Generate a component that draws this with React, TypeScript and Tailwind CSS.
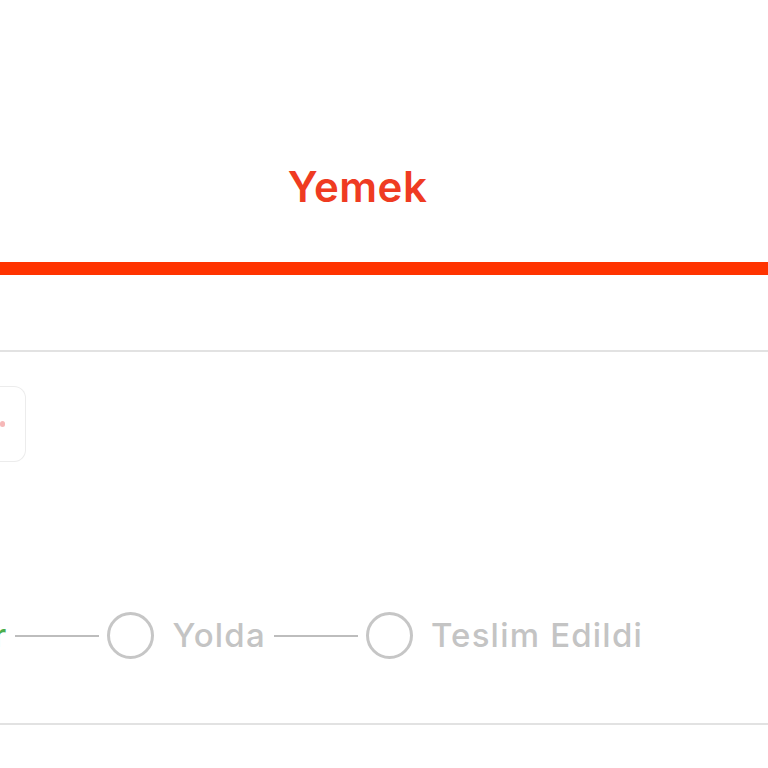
import React from "react"

const steps = [
  { label: "Hazırlanıyor", done: true },
  { label: "Yolda", done: false },
  { label: "Teslim Edildi", done: false },
]

function StepCircle() {
  return <div className="w-[47px] h-[47px] rounded-full border-[3.5px] border-[#c6c6c6] shrink-0" />
}

export default function App() {
  return (
    <div
      className="w-[768px] h-[768px] bg-white overflow-hidden flex flex-col"
      style={{ fontFamily: "Inter, 'Liberation Sans', sans-serif" }}
    >
      {/* tab header */}
      <div className="h-[262px] shrink-0 flex items-center justify-center pr-[53px] pt-[112px]">
        <span className="text-[42px] leading-none font-semibold text-[#ef3b22] tracking-[0.5px]">Yemek</span>
      </div>
      <div className="h-[13px] bg-[#ff3300] shrink-0" />

      {/* order panel */}
      <div className="mt-[75px] shrink-0 border-t-2 border-[#e2e2e2]">
        <div className="flex mt-[34px] h-[76px]">
          <div className="w-[26px] h-full rounded-r-[12px] border border-l-0 border-[#ececec] flex items-center">
            <span className="w-[5px] h-[6px] rounded-full bg-[#f6b8b8]" />
          </div>
        </div>

        <div className="mt-[150px] flex justify-end pr-[125px] overflow-hidden whitespace-nowrap">
          {steps.map((s, i) => (
            <div key={s.label} className="flex items-center shrink-0">
              {i > 0 && (
                <>
                  <div className="w-[84px] h-[2px] bg-[#bdbdbd] mx-[8px]" />
                  <StepCircle />
                </>
              )}
              <span
                className={
                  "text-[33px] leading-none font-medium tracking-[1.2px] " +
                  (s.done ? "text-[#4cae4c]" : "text-[#c4c4c4] ml-[18px]")
                }
              >
                {s.label}
              </span>
            </div>
          ))}
        </div>

        <div className="mt-[64px] border-t-2 border-[#e2e2e2]" />
      </div>
    </div>
  )
}
